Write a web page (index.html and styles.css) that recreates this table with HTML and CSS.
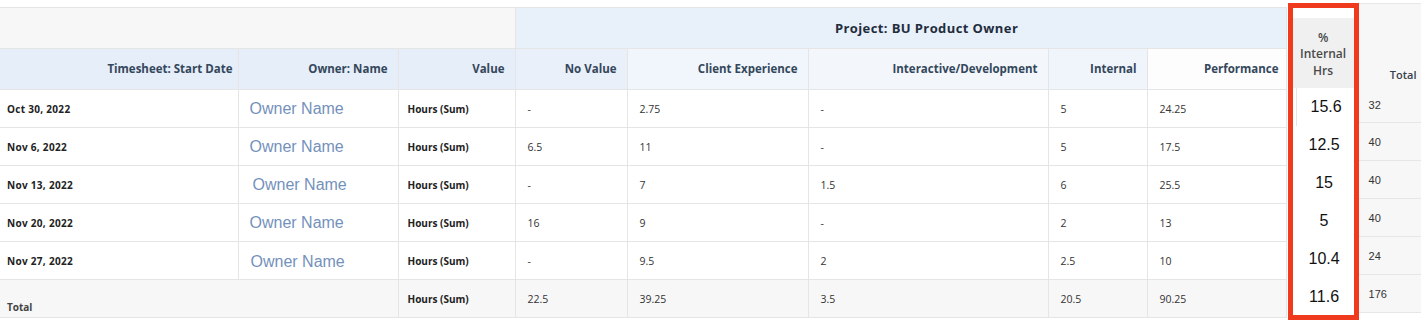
FILE: index.html
```html
<!DOCTYPE html>
<html>
<head>
<meta charset="utf-8">
<link rel="stylesheet" href="styles.css">
</head>
<body>
<div class="page">
  <table class="report">
    <colgroup>
      <col class="c1"><col class="c2"><col class="c3"><col class="c4"><col class="c5"><col class="c6"><col class="c7"><col class="c8">
    </colgroup>
    <thead>
      <tr class="h1">
        <th colspan="3" class="blank"></th>
        <th colspan="5" class="proj">Project: BU Product Owner</th>
      </tr>
      <tr class="h2">
        <th class="lb">Timesheet: Start Date</th>
        <th class="lb">Owner: Name</th>
        <th class="lb">Value</th>
        <th class="nv">No Value</th>
        <th class="ce">Client Experience</th>
        <th class="id">Interactive/Development</th>
        <th class="in">Internal</th>
        <th class="pf">Performance</th>
      </tr>
    </thead>
    <tbody>
      <tr>
        <td class="date">Oct 30, 2022</td><td class="owner">Owner Name</td><td class="val">Hours (Sum)</td>
        <td>-</td><td>2.75</td><td>-</td><td>5</td><td>24.25</td>
      </tr>
      <tr>
        <td class="date">Nov 6, 2022</td><td class="owner">Owner Name</td><td class="val">Hours (Sum)</td>
        <td>6.5</td><td>11</td><td>-</td><td>5</td><td>17.5</td>
      </tr>
      <tr>
        <td class="date">Nov 13, 2022</td><td class="owner shift">Owner Name</td><td class="val">Hours (Sum)</td>
        <td>-</td><td>7</td><td>1.5</td><td>6</td><td>25.5</td>
      </tr>
      <tr>
        <td class="date">Nov 20, 2022</td><td class="owner">Owner Name</td><td class="val">Hours (Sum)</td>
        <td>16</td><td>9</td><td>-</td><td>2</td><td>13</td>
      </tr>
      <tr>
        <td class="date">Nov 27, 2022</td><td class="owner low">Owner Name</td><td class="val">Hours (Sum)</td>
        <td>-</td><td>9.5</td><td>2</td><td>2.5</td><td>10</td>
      </tr>
      <tr class="total">
        <td colspan="2" class="total-label">Total</td><td class="val">Hours (Sum)</td>
        <td>22.5</td><td>39.25</td><td>3.5</td><td>20.5</td><td>90.25</td>
      </tr>
    </tbody>
  </table>

  <div class="pasted">
    <div class="pasted-head">%<br>Internal<br>Hrs</div>
    <div class="pasted-cell first">15.6</div>
    <div class="pasted-cell">12.5</div>
    <div class="pasted-cell">15</div>
    <div class="pasted-cell">5</div>
    <div class="pasted-cell">10.4</div>
    <div class="pasted-cell">11.6</div>
  </div>

  <div class="totals">
    <div class="totals-head">Total</div>
    <div class="totals-cell first">32</div>
    <div class="totals-cell">40</div>
    <div class="totals-cell">40</div>
    <div class="totals-cell">40</div>
    <div class="totals-cell">24</div>
    <div class="totals-cell">176</div>
  </div>
</div>
</body>
</html>
```

FILE: styles.css
```css
body {
  margin: 0;
  background: #ffffff;
}

.page {
  display: flex;
  align-items: flex-start;
}

.report {
  margin-top: 7px;
  width: 1286px;
  table-layout: fixed;
  border-collapse: collapse;
  font-family: "Open Sans", Lato, sans-serif;
  font-size: 10.5px;
  color: #333333;
}

.c1 { width: 238px; }
.c2 { width: 160px; }
.c3 { width: 117px; }
.c4 { width: 112px; }
.c5 { width: 181px; }
.c6 { width: 240px; }
.c7 { width: 99px; }
.c8 { width: 139px; }

.report th,
.report td {
  border: 1px solid #e5e5e5;
  padding: 0 10px 0 12px;
  white-space: nowrap;
  overflow: hidden;
  line-height: 14px;
}

.report th:first-child,
.report td:first-child {
  border-left: none;
}

.report thead th {
  font-weight: 700;
  font-size: 11.5px;
  color: #34475b;
  text-align: right;
}

.report thead tr {
  height: 41px;
}

.h1 .blank {
  background: #f7f7f7;
}

.h1 .proj {
  background: #e8f0fa;
  text-align: center;
  padding-left: 62px;
  font-size: 13px;
  letter-spacing: 0.4px;
  color: #1f2d3d;
}

.h2 .lb { background: #e6eef9; }
.h2 th.lb:first-child { padding-right: 5px; }
.h2 .nv { background: #e9f0fa; }
.h2 .ce { background: #f1f6fc; }
.h2 .id { background: #f3f7fc; }
.h2 .in { background: #f0f5fb; }
.h2 .pf { background: #fdfdfe; padding-right: 7px; }

.report tbody tr {
  height: 38px;
}

.report tbody td {
  padding-top: 0;
  padding-bottom: 0;
}

.report tbody td.date {
  padding-left: 7px;
  font-size: 10px;
  letter-spacing: 0.3px;
  font-weight: 700;
  color: #222222;
}

.report tbody td.owner {
  font-family: "Liberation Sans", Arial, sans-serif;
  font-size: 16px;
  line-height: 18px;
  color: #7491bc;
  padding-left: 11px;
}

.report tbody td.owner.shift {
  padding-left: 14px;
}

.report tbody td.owner.low {
  padding-left: 12px;
  padding-top: 3px;
}

.report tbody td.val {
  padding-left: 9px;
  font-size: 10px;
  font-weight: 700;
  color: #222222;
}

.total td {
  background: #f7f7f7;
}

.total td.total-label {
  vertical-align: bottom;
  padding-left: 7px;
  padding-bottom: 3px;
  font-size: 10px;
  font-weight: 700;
  color: #444444;
}

/* pasted % column with red highlight */
.pasted {
  margin-top: 3px;
  margin-left: 1px;
  width: 61px;
  height: 297px;
  border: 5px solid #ef3a1e;
  padding-top: 10px;
  box-sizing: content-box;
  background: #ffffff;
  overflow: hidden;
  display: flex;
  flex-direction: column;
  font-family: "Liberation Sans", Arial, sans-serif;
}

.pasted-head {
  height: 70px;
  flex: none;
  background: #f0f0f0;
  display: flex;
  align-items: center;
  justify-content: center;
  text-align: center;
  padding-top: 3px;
  box-sizing: border-box;
  font-family: "Open Sans", sans-serif;
  font-weight: 600;
  font-size: 12px;
  line-height: 16.5px;
  color: #4a4a4a;
}

.pasted-cell {
  height: 38px;
  flex: none;
  display: flex;
  align-items: center;
  justify-content: center;
  padding-left: 2px;
  font-size: 16px;
  color: #111111;
}

.pasted-cell.first {
  border-left: 1px solid #e5e5e5;
  margin-left: 3px;
}

/* right totals column */
.totals {
  margin-top: 3px;
  width: 62px;
  background: #f7f7f7;
  border-top: 1px solid #e8e8e8;
  display: flex;
  flex-direction: column;
  font-family: "Liberation Sans", Arial, sans-serif;
}

.totals-head {
  height: 84px;
  display: flex;
  align-items: flex-end;
  justify-content: flex-end;
  padding-right: 4px;
  padding-bottom: 6px;
  box-sizing: border-box;
  font-family: "Open Sans", sans-serif;
  font-weight: 600;
  font-size: 11px;
  color: #37414b;
}

.totals-cell {
  height: 38px;
  box-sizing: border-box;
  border-bottom: 1px solid #e6e6e6;
  display: flex;
  align-items: center;
  padding-left: 10px;
  font-size: 11px;
  color: #333333;
}

.totals-cell.first {
  height: 35px;
}
```
